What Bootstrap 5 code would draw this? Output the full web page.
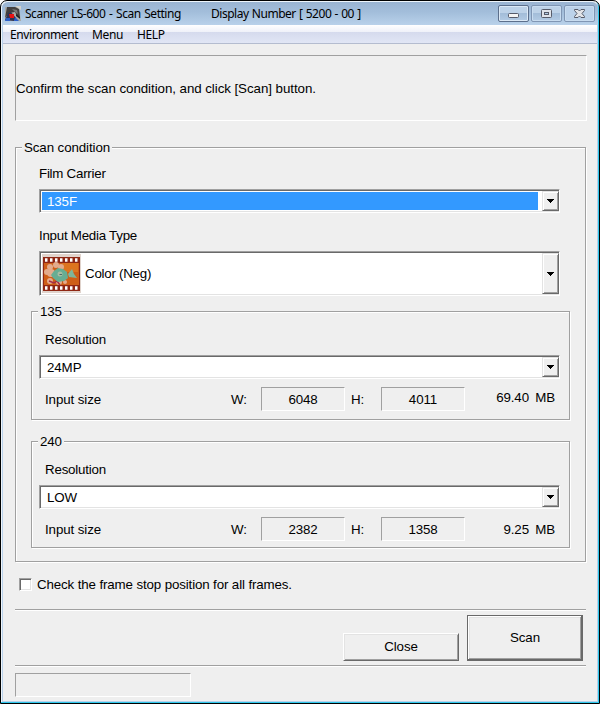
<!DOCTYPE html>
<html lang="en">
<head>
<meta charset="utf-8">
<title>Scanner LS-600 - Scan Setting</title>
<link href="https://cdn.jsdelivr.net/npm/bootstrap@5.3.0/dist/css/bootstrap.min.css" rel="stylesheet">
<style>
body{width:600px;height:704px;overflow:hidden;background:#fff;color:#000;font:13.33px/16px "Liberation Sans",Arial,sans-serif;letter-spacing:-.1px}
.win{width:600px;height:704px;background:#efefef;border:1px solid #000;border-radius:7px 7px 0 0;box-shadow:inset -1px -1px 0 #2fc8ec,inset 1px 1px 0 #eef5fb,inset 2px 0 0 #b9d1ea,inset -2px -2px 0 #b9d1ea;padding:1px 2px 2px 2px}
.titlebar{height:23px;margin:0 -1px;padding:0 3px 0 3px;background:linear-gradient(#9ab4d2,#a3bedb 45%,#b9d1ea);border-radius:6px 6px 0 0;font:12px/24px "Noto Sans","Open Sans",sans-serif;white-space:pre}
.title-a{margin-left:4px;width:186px;letter-spacing:-.48px;word-spacing:1px}
.title-b{letter-spacing:-.48px;word-spacing:.6px}
.cap{width:31px;height:17px;border:1px solid #8096b4;border-radius:2px;box-shadow:inset 0 0 0 1px #c8dcf0;background:linear-gradient(#bdd2e8 48%,#a3bdd9 50%,#b3cbe4)}
.cap-main{border-color:#5c6f8c;box-shadow:inset 0 0 0 1px #dce9f6}
.cap-x{background:#bcd2ea}
.menubar{height:19px;background:linear-gradient(#fff 0,#eff1f9 38%,#d5daed 39%,#e1e6f5 100%);border-bottom:1px solid #b4bccf;font:12px/20px "Noto Sans","Open Sans",sans-serif;padding-left:7px;letter-spacing:-.35px}
.menu-env{width:82px;letter-spacing:-.38px}.menu-mid{width:45px}
.client{padding:11px 12px 0}
.sunk{border:1px solid;border-color:#a0a0a0 #fff #fff #a0a0a0}
.message{width:572px;height:66px;padding-top:1px}
.t-msg{letter-spacing:-.06px}
.t-check{letter-spacing:-.13px}
.t-neg{letter-spacing:-.25px}
.etched{border:1px solid #a0a0a0;box-shadow:1px 1px 0 #fff,inset 1px 1px 0 #fff}
.group-main{width:571px;height:415px;margin-top:26px;padding:0 15px}
.legend-text{display:block;width:max-content;background:#efefef;position:relative;margin-top:-8px;height:16px;padding:0 2px}
.group-main>.legend-text{margin-left:-9px}
.label{padding-left:8px}
.gap-a{margin-top:10px;margin-bottom:7px;letter-spacing:-.25px}
.gap-b{margin-top:15px;margin-bottom:7px;letter-spacing:-.25px}
.combo{height:24px;width:521px;margin-left:8px;background:#fff;border:1px solid;border-color:#a0a0a0 #fff #fff #a0a0a0;box-shadow:inset 1px 1px 0 #696969,inset 0 -1px 0 #e3e3e3;padding:1px 0 1px 1px}
.combo-tall{height:45px}
.combo-text{height:20px;padding-left:6px;line-height:21px}
.picked{background:#39f;color:#fff;height:18px;margin:1px 4px 0 1px;line-height:20px;padding-left:5px}
.drop{width:17px;background:#efefef;border:1px solid;border-color:#e3e3e3 #696969 #696969 #e3e3e3;box-shadow:inset 1px 1px 0 #fff,inset -1px -1px 0 #a0a0a0}
.group-sub{width:539px;height:109px;margin-top:15px}
.group-sub .combo{margin-left:7px}
.group-sub .label{padding-left:13px}
.group-sub .legend-text{margin-left:6px}
.group-240{height:107px;margin-top:21px}
.gap-c{margin-top:12px;margin-bottom:7px;letter-spacing:-.2px}
.sizes{height:24px;margin-top:8px;padding-left:13px;line-height:26px}
.col-name{width:186px}.col-w{width:30px}.col-h{width:36px;padding-left:6px}
.val{width:84px;height:24px;text-align:center;line-height:23px}
.mb{width:64px;text-align:right}
.mb-unit{width:26px;text-align:right}
.raised-up{margin-top:-2px}
.checkline{margin:15px 0 0 4px;height:16px}
.box{width:13px;height:13px;background:#fff;border:1px solid;border-color:#a0a0a0 #fff #fff #a0a0a0;box-shadow:inset 1px 1px 0 #696969,inset -1px -1px 0 #e3e3e3;margin-top:1px}
.rule{height:2px;width:571px;border-top:1px solid #a0a0a0;background:#fff}
.actions{height:54px;padding:4px 3px 4px 0;width:571px}
.push{width:116px;height:28px;color:#000;background:#efefef;font:inherit;letter-spacing:inherit;padding:0;border:1px solid;border-color:#fff #696969 #696969 #fff;box-shadow:inset 1px 1px 0 #e3e3e3,inset -1px -1px 0 #a0a0a0}
.push-main{height:46px;border-color:#696969;box-shadow:inset -1px -1px 0 #696969,inset 1px 1px 0 #fff,inset -2px -2px 0 #a0a0a0,inset 2px 2px 0 #e3e3e3}
.status{width:176px;height:24px;margin-top:6px}
svg{display:block;flex:none}
</style>
<script src="https://cdn.jsdelivr.net/npm/bootstrap@5.3.0/dist/js/bootstrap.bundle.min.js"></script>
</head>
<body>
<main class="win">
  <header class="titlebar d-flex">
    <svg class="mt-1" width="16" height="16" viewBox="0 0 16 16"><path d="M0 1h14l2 14H0z" fill="#a9a9a5"/><path d="M2 1h8l4 2 1 8-3-1-2-4-6 1-4 5z" fill="#43403f"/><path d="M7 3l5 1 1 4-3-2z" fill="#777"/><path d="M0 14l3-7 3-1 5 6-2 3z" fill="#303452"/><path d="M4 8h5v4H5z" fill="#e81414"/><path d="M1 12h4v3H0zM10 11l4 4H9z" fill="#2b5fc8"/><path d="M11 8l4 3v2l-4-3z" fill="#222"/><path d="M10 0h6v4z" fill="#d2d2ce"/></svg>
    <span class="title-a">Scanner LS-600 - Scan Setting</span><span class="title-b">Display Number [ 5200 - 00 ]</span>
    <div class="d-flex ms-auto" style="gap:2px;padding-top:3px">
      <div class="cap cap-main"><svg width="29" height="15" viewBox="0 0 29 15"><rect x="9.500" y="7.500" width="10" height="4" rx="1" fill="#f4f4f4" stroke="#565b69"/></svg></div>
      <div class="cap"><svg width="29" height="15" viewBox="0 0 29 15"><rect x="9.500" y="3.500" width="10" height="8" rx="1" fill="#dfe3ea" stroke="#565b69"/><rect x="12.500" y="6.500" width="4" height="2" fill="#b2cbe4" stroke="#565b69"/></svg></div>
      <div class="cap cap-x"><svg width="29" height="15" viewBox="0 0 29 15"><path d="M9.500 3.500h3.500l1.500 1.500 1.500-1.500h3.500v1l-2.500 3 2.500 3v1H16l-1.500-1.500-1.500 1.500H9.500v-1l2.500-3-2.500-3z" fill="#e2e4e9" stroke="#565b69"/></svg></div>
    </div>
  </header>
  <nav class="menubar d-flex"><span class="menu-env">Environment</span><span class="menu-mid">Menu</span><span>HELP</span></nav>
  <div class="client">
    <div class="message sunk d-flex align-items-center"><span class="t-msg">Confirm the scan condition, and click [Scan] button.</span></div>
    <section class="group-main etched">
      <span class="legend-text">Scan condition</span>
      <div class="label gap-a">Film Carrier</div>
      <div class="combo d-flex"><div class="picked flex-grow-1">135F</div><div class="drop d-flex align-items-center justify-content-center"><svg width="7" height="4" viewBox="0 0 7 4" shape-rendering="crispEdges"><path d="M0 0h7v1H6v1H5v1H4v1H3V3H2V2H1V1H0z"/></svg></div></div>
      <div class="label gap-b">Input Media Type</div>
      <div class="combo combo-tall d-flex">
        <div class="d-flex flex-grow-1 align-items-center">
          <svg style="margin-left:1px" width="39" height="39" viewBox="0 0 39 39"><path fill="#e0d3cc" d="M0 0h39v39H0z"/><path fill="#8f2714" d="M1 3h37v34H1z"/><path fill="#ce5e17" d="M2 9h35v22H2z"/><path fill="#dc741f" d="M20 9h16v9H22z"/><path d="M3 6h34M3 34h34" stroke="#fff" stroke-width="3.500" stroke-dasharray="2.500 2.500"/><g fill="#e3ab8c"><circle cx="8" cy="13" r="3"/><circle cx="14" cy="11" r="3"/><circle cx="19" cy="13" r="3"/><circle cx="5" cy="18" r="3"/><circle cx="9" cy="19" r="4"/><circle cx="8" cy="27" r="3"/><circle cx="17" cy="28" r="3"/><circle cx="23" cy="28" r="2"/></g><path d="M7 27l5 2 3-2 3 4" fill="none" stroke="#a52c45" stroke-width="1.500"/><path d="M12 17l4-3 5 1 4 3 1 6-4 3-6 1-5-4-2-3z" fill="#66ad93"/><path d="M26 20l4-5 2 5 3 4-8-1z" fill="#7fb59b"/><circle cx="18" cy="20" r="2.500" fill="#a5bda2"/><path d="M18 20h2v1h-3z" fill="#496d69"/></svg>
          <span style="padding-left:4px" class="t-neg">Color (Neg)</span>
        </div>
        <div class="drop d-flex align-items-center justify-content-center"><svg width="7" height="4" viewBox="0 0 7 4" shape-rendering="crispEdges"><path d="M0 0h7v1H6v1H5v1H4v1H3V3H2V2H1V1H0z"/></svg></div>
      </div>
      <section class="group-sub etched">
        <span class="legend-text">135</span>
        <div class="label gap-c">Resolution</div>
        <div class="combo d-flex"><div class="combo-text flex-grow-1">24MP</div><div class="drop d-flex align-items-center justify-content-center"><svg width="7" height="4" viewBox="0 0 7 4" shape-rendering="crispEdges"><path d="M0 0h7v1H6v1H5v1H4v1H3V3H2V2H1V1H0z"/></svg></div></div>
        <div class="sizes d-flex"><span class="col-name">Input size</span><span class="col-w">W:</span><div class="val sunk">6048</div><span class="col-h">H:</span><div class="val sunk">4011</div><span class="mb raised-up">69.40</span><span class="mb-unit raised-up">MB</span></div>
      </section>
      <section class="group-sub group-240 etched">
        <span class="legend-text">240</span>
        <div class="label gap-c">Resolution</div>
        <div class="combo d-flex"><div class="combo-text flex-grow-1">LOW</div><div class="drop d-flex align-items-center justify-content-center"><svg width="7" height="4" viewBox="0 0 7 4" shape-rendering="crispEdges"><path d="M0 0h7v1H6v1H5v1H4v1H3V3H2V2H1V1H0z"/></svg></div></div>
        <div class="sizes d-flex"><span class="col-name">Input size</span><span class="col-w">W:</span><div class="val sunk">2382</div><span class="col-h">H:</span><div class="val sunk">1358</div><span class="mb">9.25</span><span class="mb-unit">MB</span></div>
      </section>
    </section>
    <div class="checkline d-flex"><div class="box"></div><span class="t-check" style="padding-left:5px">Check the frame stop position for all frames.</span></div>
    <div class="rule" style="margin-top:16px"></div>
    <div class="actions d-flex justify-content-end align-items-end"><button class="push" style="margin-right:8px">Close</button><button class="push push-main">Scan</button></div>
    <div class="rule"></div>
    <div class="status sunk"></div>
  </div>
</main>
</body>
</html>
